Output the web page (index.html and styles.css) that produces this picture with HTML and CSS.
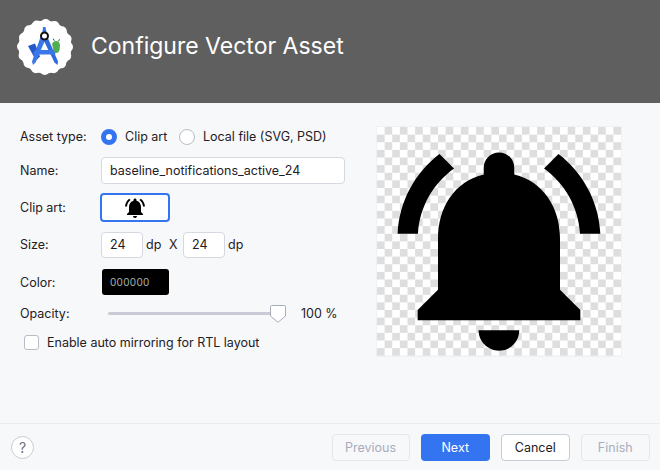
FILE: index.html
```html
<!DOCTYPE html>
<html lang="en">
<head>
<meta charset="utf-8">
<title>Configure Vector Asset</title>
<link rel="stylesheet" href="styles.css">
</head>
<body>
<div class="dialog">
  <header class="banner">
    <svg class="logo" viewBox="0 0 56 56" width="56" height="56" aria-hidden="true">
      <circle cx="28" cy="28" r="26.500" fill="#fff"/>
      <circle cx="28" cy="28" r="23" fill="none" stroke="#fff" stroke-width="10" stroke-linecap="round" stroke-dasharray="0 9.032"/>
      <path fill="#4fae4f" d="M35 25c1-2.500 3-3.500 5-3 2 .5 3 2.500 3 5l-.5 4c-.5 2-1.500 3-3.500 3h-2z"/>
      <path fill="#2a6e3a" d="M37 22l-1.200-2 .8-.5 1.200 2zM41 22l1.200-2 .8.5-1.200 2z"/>
      <path fill="#2459c9" d="M11 27l7-2.500 5 13-4 4z"/>
      <path fill="#3b78e7" d="M26 8h2.500L30 16h-5z"/>
      <path fill="#3b78e7" d="M23.500 18h6L18.500 43.500 16 46l-1-3.500z"/>
      <path fill="#2f6be0" d="M25 18h5.500L41 42.500l-.5 3.500-3-2.500z"/>
      <path fill="#3b78e7" d="M18 31h19l1.500 4.500H15.500z"/>
      <circle cx="27.500" cy="17" r="3.500" fill="#fff" stroke="#111" stroke-width="2"/>
    </svg>
    <h1 class="banner-title">Configure Vector Asset</h1>
  </header>

  <main class="content">
    <form class="form">
      <div class="row row-type">
        <span class="label">Asset type:</span>
        <span class="radio radio-on"></span>
        <span class="radio-text radio-text-first">Clip art</span>
        <span class="radio"></span>
        <span class="radio-text">Local file (SVG, PSD)</span>
      </div>
      <div class="row row-name">
        <span class="label">Name:</span>
        <div class="field field-name">baseline_notifications_active_24</div>
      </div>
      <div class="row row-clip">
        <span class="label">Clip art:</span>
        <div class="clip-button">
          <svg viewBox="0 0 24 24" width="24" height="24" aria-hidden="true"><path d="M7.58 4.080L6.150 2.650C3.750 4.480 2.170 7.300 2.030 10.500h2c.15-2.650 1.510-4.970 3.550-6.420zM19.970 10.500h2c-.15-3.200-1.730-6.020-4.120-7.850l-1.420 1.430c2.020 1.450 3.390 3.770 3.540 6.420zM18 11c0-3.070-1.640-5.640-4.500-6.320V4c0-.83-.67-1.500-1.500-1.500s-1.500.67-1.500 1.500v.68C7.630 5.360 6 7.920 6 11v5l-2 2v1h16v-1l-2-2v-5zm-6 11c.14 0 .27-.01.4-.04.65-.14 1.180-.58 1.440-1.180.1-.24.15-.5.15-.78h-4c.01 1.100.9 2 2.010 2z"/></svg>
        </div>
      </div>
      <div class="row row-size">
        <span class="label">Size:</span>
        <div class="field field-size">24</div>
        <span class="unit">dp</span>
        <span class="times">X</span>
        <div class="field field-size">24</div>
        <span class="unit">dp</span>
      </div>
      <div class="row row-color">
        <span class="label">Color:</span>
        <div class="swatch">000000</div>
      </div>
      <div class="row row-opacity">
        <span class="label">Opacity:</span>
        <div class="slider">
          <span class="slider-track"></span>
          <svg class="slider-thumb" viewBox="0 0 16 18" width="16" height="18" aria-hidden="true"><path d="M1.500.5h13a1 1 0 0 1 1 1V11L8 17.300.5 11V1.500a1 1 0 0 1 1-1z" fill="#fff" stroke="#a9adb8"/></svg>
        </div>
        <span class="percent">100 %</span>
      </div>
      <div class="row row-check">
        <span class="checkbox"></span>
        <span class="check-text">Enable auto mirroring for RTL layout</span>
      </div>
    </form>
    <div class="preview">
      <svg viewBox="0 0 24 24" width="244" height="244" aria-hidden="true"><path d="M7.58 4.080L6.150 2.650C3.750 4.480 2.170 7.300 2.030 10.500h2c.15-2.650 1.510-4.970 3.550-6.420zM19.970 10.500h2c-.15-3.200-1.730-6.020-4.120-7.850l-1.420 1.430c2.020 1.450 3.390 3.770 3.540 6.420zM18 11c0-3.070-1.640-5.640-4.500-6.320V4c0-.83-.67-1.500-1.500-1.500s-1.500.67-1.500 1.500v.68C7.630 5.360 6 7.920 6 11v5l-2 2v1h16v-1l-2-2v-5zm-6 11c.14 0 .27-.01.4-.04.65-.14 1.180-.58 1.440-1.180.1-.24.15-.5.15-.78h-4c.01 1.100.9 2 2.010 2z"/></svg>
    </div>
  </main>

  <footer class="footer">
    <span class="help">?</span>
    <div class="actions">
      <span class="btn btn-disabled btn-wide">Previous</span>
      <span class="btn btn-primary">Next</span>
      <span class="btn btn-default">Cancel</span>
      <span class="btn btn-disabled">Finish</span>
    </div>
  </footer>
</div>
</body>
</html>
```

FILE: styles.css
```css
* { box-sizing: border-box; }
html, body { margin: 0; padding: 0; }
body {
  width: 660px;
  height: 470px;
  overflow: hidden;
  font-family: "Inter", "Liberation Sans", sans-serif;
  font-size: 12.500px;
  color: #1f2024;
  background: #f7f8fa;
  white-space: nowrap;
}
.dialog { display: flex; flex-direction: column; height: 470px; }

.banner {
  flex: 0 0 103px;
  background: #5f5f5f;
  display: flex;
  align-items: center;
  padding: 0 0 12px 17px;
}
.logo { flex: none; margin-top: 2px; }
.banner-title {
  margin: 0 0 0 18px;
  font-size: 23px;
  font-weight: 400;
  color: #fff;
}

.content {
  flex: 0 0 320px;
  display: flex;
  justify-content: space-between;
  padding: 23.500px 39px 0 20px;
}
.form { width: 325px; }
.row { display: flex; align-items: center; }
.label { flex: 0 0 81px; }
.row-type { height: 22px; margin-top: -1px; }
.row-name { height: 27px; margin-top: 9px; }
.row-clip { height: 29px; margin-top: 9.500px; }
.row-size { height: 26px; margin-top: 9.500px; }
.row-color { height: 26px; margin-top: 11.500px; }
.row-opacity { height: 20px; margin-top: 8.500px; }
.row-check { height: 16px; margin-top: 11px; padding-left: 4px; }

.radio {
  flex: none;
  width: 16px;
  height: 16px;
  margin-right: 8px;
  border-radius: 50%;
  border: 1px solid #b9bcc6;
  background: #fff;
}
.radio-on { border: 5px solid #3574f0; }
.radio-text-first { flex: 0 0 54px; }

.field {
  height: 100%;
  background: #fff;
  border: 1px solid #d5d8e0;
  border-radius: 4px;
  display: flex;
  align-items: center;
  padding-left: 8px;
}
.field-name { width: 244px; }
.field-size { width: 42px; padding-left: 8px; }
.unit { padding-left: 3px; width: 25px; }
.times { margin-left: 1px; width: 14px; }

.clip-button {
  width: 70px;
  height: 100%;
  margin-left: -1px;
  background: #fff;
  border: 2px solid #3574f0;
  border-radius: 4px;
  display: flex;
  align-items: center;
  justify-content: center;
}

.swatch {
  width: 67px;
  height: 100%;
  margin-left: 1px;
  background: #000;
  border-radius: 3px;
  color: #aab4aa;
  font-size: 10px;
  letter-spacing: 0.3px;
  display: flex;
  align-items: center;
  padding-left: 8px;
}

.slider { position: relative; width: 178px; height: 20px; margin-left: 7px; display: flex; align-items: center; }
.slider-track { width: 170px; height: 3px; background: #c9ccd6; border-radius: 2px; }
.slider-thumb { position: absolute; left: 162px; top: 1px; }
.percent { margin-left: 15px; }

.checkbox {
  flex: none;
  width: 15px;
  height: 15px;
  background: #fff;
  border: 1px solid #b9bcc6;
  border-radius: 3px;
  margin-right: 8px;
}

.preview {
  flex: none;
  width: 244px;
  height: 229px;
  overflow: hidden;
  background-color: #fff;
  background-image: conic-gradient(#dedede 25%, #fff 0 50%, #dedede 0 75%, #fff 0);
  background-size: 15.250px 15.250px;
  box-shadow: 0 0 0 1px #f0f1f5;
}
.preview svg { display: block; }

.footer {
  flex: 1;
  border-top: 1px solid #ebecf0;
  display: flex;
  align-items: center;
  justify-content: space-between;
  padding: 1px 10.500px 0 11px;
}
.help {
  width: 23px;
  height: 23px;
  border: 1px solid #c9ccd6;
  border-radius: 50%;
  background: #fff;
  color: #6c707e;
  font-size: 14px;
  display: flex;
  align-items: center;
  justify-content: center;
}
.actions { display: flex; gap: 11.500px; }
.btn {
  width: 68.500px;
  height: 27px;
  border-radius: 4px;
  display: flex;
  align-items: center;
  justify-content: center;
  border: 1px solid transparent;
}
.btn-wide { width: 78px; }
.btn-disabled { border-color: #e4e6ec; color: #a8adbd; }
.btn-primary { background: #3574f0; color: #fff; }
.btn-default { background: #fff; border-color: #c9ccd6; color: #1f2024; }
```
